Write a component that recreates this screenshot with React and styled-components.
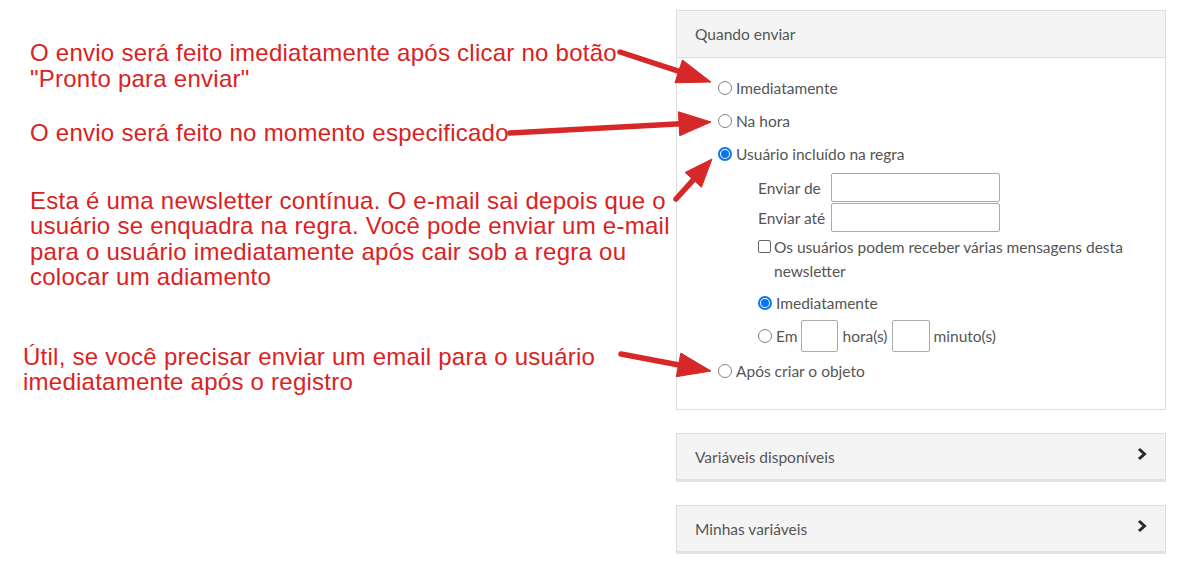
import React from "react";
import styled, { createGlobalStyle } from "styled-components";

const Global = createGlobalStyle`
  html, body { margin: 0; padding: 0; background: #fff; }
  body { font-family: "Lato", "Liberation Sans", sans-serif; }
  * { box-sizing: border-box; }
`;

const Page = styled.div`
  position: relative;
  width: 1199px;
  height: 571px;
  display: flex;
  overflow: hidden;
`;

const Notes = styled.div`
  width: 676px;
  display: flex;
  flex-direction: column;
`;

const Note = styled.p`
  margin: ${(p) => p.$gap}px 0 0 ${(p) => p.$left}px;
  font-family: "Liberation Sans", Arial, sans-serif;
  font-size: 24px;
  letter-spacing: 0.25px;
  line-height: 25.5px;
  color: #db2222;
  white-space: nowrap;
`;

const Sidebar = styled.div`
  width: 490px;
  padding-top: 10px;
  display: flex;
  flex-direction: column;
  gap: 23px;
`;

const Panel = styled.section`
  border: 1px solid #dddddd;
  background: #fff;
`;

const PanelHeader = styled.div`
  height: 47px;
  background: #f4f4f4;
  border-bottom: 1px solid #dddddd;
  display: flex;
  align-items: center;
  padding: 0 18px;
  font-size: 15.5px;
  color: #555;
`;

const PanelBody = styled.div`
  padding: 13px 18px 19px 41px;
  display: flex;
  flex-direction: column;
  color: #555;
  font-size: 15.5px;
`;

const OptionRow = styled.label`
  height: ${(p) => p.$h || 33}px;
  display: flex;
  align-items: center;
  gap: 4px;
`;

const Radio = styled.span`
  width: 14px;
  height: 14px;
  border-radius: 50%;
  border: 1px solid ${(p) => (p.$checked ? "#0b75f0" : "#808080")};
  background: #fff;
  display: flex;
  align-items: center;
  justify-content: center;
  flex: none;
  &::after {
    content: "";
    display: ${(p) => (p.$checked ? "block" : "none")};
    width: 8px;
    height: 8px;
    border-radius: 50%;
    background: #0b75f0;
  }
  ${(p) => p.$checked && "border-width: 2px;"}
`;

const Sub = styled.div`
  padding-left: 40px;
  display: flex;
  flex-direction: column;
  padding-top: 3px;
`;

const FieldGrid = styled.div`
  display: grid;
  grid-template-columns: auto 169px;
  justify-content: start;
  column-gap: 6px;
  row-gap: 1px;
  align-items: center;
`;

const TextInput = styled.input`
  width: ${(p) => p.$w}px;
  height: ${(p) => p.$h}px;
  border: 1px solid #a9a9a9;
  border-radius: 2px;
  background: #fff;
  margin: 0;
  padding: 0 4px;
  font: inherit;
`;

const CheckRow = styled.div`
  display: flex;
  gap: 3px;
  margin-top: 3px;
  margin-bottom: 3px;
  line-height: 24px;
`;

const Check = styled.span`
  width: 13px;
  height: 13px;
  border: 1px solid #666;
  border-radius: 2px;
  flex: none;
  margin-top: 5px;
`;

const InlineRow = styled.div`
  height: ${(p) => p.$h}px;
  display: flex;
  align-items: center;
  gap: 4px;
  margin-bottom: ${(p) => p.$mb || 0}px;
`;

const Collapsed = styled.section`
  height: 49px;
  border: 1px solid #dddddd;
  border-bottom: 3px solid #e2e2e2;
  background: #f4f4f4;
  display: flex;
  align-items: center;
  justify-content: space-between;
  padding: 0 18px 0 18px;
  font-size: 15.5px;
  color: #555;
`;

const Chevron = styled.svg`
  margin-top: -6px;
`;

const Arrows = styled.svg`
  position: absolute;
  left: 0;
  top: 0;
  pointer-events: none;
`;

function Arrow({ x1, y1, x2, y2, head = 30, hw = 12 }) {
  const dx = x2 - x1;
  const dy = y2 - y1;
  const len = Math.hypot(dx, dy);
  const ux = dx / len;
  const uy = dy / len;
  const bx = x2 - ux * head;
  const by = y2 - uy * head;
  const px = -uy;
  const py = ux;
  return (
    <g fill="#d62828" stroke="#d62828">
      <line x1={x1} y1={y1} x2={bx + ux * 2} y2={by + uy * 2} strokeWidth="5.5" strokeLinecap="round" />
      <polygon
        points={`${x2},${y2} ${bx + px * hw},${by + py * hw} ${bx - px * hw},${by - py * hw}`}
        strokeWidth="1"
        strokeLinejoin="round"
      />
    </g>
  );
}

function ChevronIcon() {
  return (
    <Chevron width="10" height="14" viewBox="0 0 10 14">
      <polyline points="2,2 7.5,7 2,12" fill="none" stroke="#2a2a2a" strokeWidth="3" />
    </Chevron>
  );
}

export default function App() {
  return (
    <>
      <Global />
      <Page>
        <Notes>
          <Note $gap={40} $left={30}>
            O envio será feito imediatamente após clicar no botão
            <br />
            "Pronto para enviar"
          </Note>
          <Note $gap={29} $left={30}>
            O envio será feito no momento especificado
          </Note>
          <Note $gap={42} $left={30}>
            Esta é uma newsletter contínua. O e-mail sai depois que o
            <br />
            usuário se enquadra na regra. Você pode enviar um e-mail
            <br />
            para o usuário imediatamente após cair sob a regra ou
            <br />
            colocar um adiamento
          </Note>
          <Note $gap={54} $left={23}>
            Útil, se você precisar enviar um email para o usuário
            <br />
            imediatamente após o registro
          </Note>
        </Notes>
        <Sidebar>
          <Panel>
            <PanelHeader>Quando enviar</PanelHeader>
            <PanelBody>
              <OptionRow>
                <Radio />
                Imediatamente
              </OptionRow>
              <OptionRow>
                <Radio />
                Na hora
              </OptionRow>
              <OptionRow>
                <Radio $checked />
                Usuário incluído na regra
              </OptionRow>
              <Sub>
                <FieldGrid>
                  <span>Enviar de</span>
                  <TextInput $w={169} $h={29} />
                  <span>Enviar até</span>
                  <TextInput $w={169} $h={29} />
                </FieldGrid>
                <CheckRow>
                  <Check />
                  <span>
                    Os usuários podem receber várias mensagens desta
                    <br />
                    newsletter
                  </span>
                </CheckRow>
                <InlineRow $h={33} $mb={1}>
                  <Radio $checked />
                  Imediatamente
                </InlineRow>
                <InlineRow $h={32}>
                  <Radio />
                  Em
                  <TextInput $w={37} $h={32} />
                  hora(s)
                  <TextInput $w={38} $h={32} />
                  minuto(s)
                </InlineRow>
              </Sub>
              <OptionRow $h={38}>
                <Radio />
                Após criar o objeto
              </OptionRow>
            </PanelBody>
          </Panel>
          <Collapsed>
            Variáveis disponíveis
            <ChevronIcon />
          </Collapsed>
          <Collapsed>
            Minhas variáveis
            <ChevronIcon />
          </Collapsed>
        </Sidebar>
        <Arrows width="1199" height="571">
          <Arrow x1={620} y1={52} x2={711} y2={82} head={34} hw={12} />
          <Arrow x1={510} y1={133} x2={711} y2={122} head={32} hw={12} />
          <Arrow x1={676} y1={199} x2={712} y2={159} head={28} hw={11} />
          <Arrow x1={621} y1={354} x2={711} y2={371} head={33} hw={12} />
        </Arrows>
      </Page>
    </>
  );
}
